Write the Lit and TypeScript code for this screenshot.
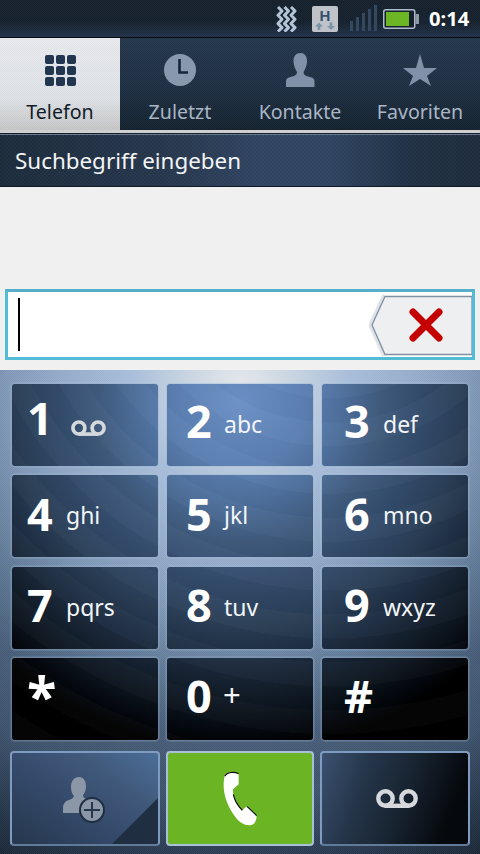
import { LitElement, html, css, svg } from "lit";
import { customElement } from "lit/decorators.js";

const VM = (w: number, h: number) => html`<svg class="vm" width=${w} height=${h} viewBox="0 0 42 19">
  <circle cx="9.5" cy="9.5" r="7.2" fill="none" stroke="#d6d9dc" stroke-width="4.4"/>
  <circle cx="32.5" cy="9.5" r="7.2" fill="none" stroke="#d6d9dc" stroke-width="4.4"/>
  <rect x="9.5" y="14.6" width="23" height="4.4" fill="#d6d9dc"/>
</svg>`;

type K = { n: string; s?: string; vm?: boolean; c?: string };
const KEYS: K[] = [
  { n: "1", vm: true, c: "one" },
  { n: "2", s: "abc" },
  { n: "3", s: "def" },
  { n: "4", s: "ghi" },
  { n: "5", s: "jkl" },
  { n: "6", s: "mno" },
  { n: "7", s: "pqrs" },
  { n: "8", s: "tuv" },
  { n: "9", s: "wxyz" },
  { n: "*", c: "star" },
  { n: "0", s: "+", c: "plus" },
  { n: "#" },
];

@customElement("app-root")
export class AppRoot extends LitElement {
  static styles = css`
    :host { display: block; width: 480px; height: 854px; overflow: hidden; font-family: "Noto Sans", "Open Sans", sans-serif; background: #f0f0f0; }
    .status { height: 37px; box-sizing: content-box; display: flex; align-items: center; justify-content: flex-end; padding-right: 10px; border-bottom: 1px solid #05090e;
      background: repeating-conic-gradient(rgba(255,255,255,.025) 0 25%, transparent 0 50%) 0 0/2px 2px, linear-gradient(#15212d, #15212d 60%, #22324a); }
    .status svg { display: block; flex: none; }
    .wave { margin-right: 14px; }
    .hs { margin-right: 12px; }
    .sig { margin-right: 6px; }
    .time { color: #fff; font-weight: 700; font-size: 20.2px; line-height: 1; margin-left: 10px; width: 41px; white-space: nowrap; font-family: "Noto Sans", sans-serif; }
    .tabs { display: flex; height: 92px; background: repeating-conic-gradient(rgba(255,255,255,.03) 0 25%, transparent 0 50%) 0 0/2px 2px, linear-gradient(#24364a, #1d2e41 55%, #13212e); }
    .tab { width: 120px; display: flex; flex-direction: column; align-items: center; color: #a9b5c4; font-size: 19.6px; }
    .tab .ico { height: 34px; margin-top: 15px; display: flex; align-items: center; justify-content: center; }
    .tab svg { display: block; }
    .tab span { margin-top: 12px; line-height: 26px; }
    .tab.on { background: repeating-conic-gradient(rgba(255,255,255,.18) 0 25%, transparent 0 50%) 0 0/2px 2px, linear-gradient(#e3e5e9, #d9dde2 65%, #bfbfbf); color: #101c2a; }
    .rule { height: 5px; box-sizing: border-box; background: #cfcfcf; display: flex; flex-direction: column; justify-content: flex-end; }
    .rule i { display: block; height: 1px; background: #15202c; }
    .rule b { display: block; height: 1px; background: #66798e; }
    .search { height: 52px; box-sizing: border-box; padding-left: 15px; display: flex; align-items: center; color: #f2f4f6; font-size: 22.4px; border-bottom: 1px solid #0d1a27;
      background: repeating-conic-gradient(rgba(255,255,255,.03) 0 25%, transparent 0 50%) 0 0/4px 4px, linear-gradient(90deg, #1b2a3a 0%, #25364c 35%, #2f4361 55%, #2f4361 68%, #1f3043 85%, #1c2a3b 100%); }
    .body { height: 183px; background: #f0f0f0; display: flex; flex-direction: column; justify-content: flex-end; padding: 0 5px 10px 5px; box-sizing: border-box; }
    .input { height: 71px; box-sizing: border-box; border: 3px solid #52bbd5; border-top: 3px solid #56aecb; background: #fff; display: flex; align-items: stretch; justify-content: space-between; padding-left: 10px; }
    .caret { width: 2px; height: 53px; background: #000; margin-top: 6px; }
    .del { display: block; flex: none; }
    .pad { height: 484px; box-sizing: border-box; padding: 14px 0 0 12px; display: flex; flex-direction: column;
      background:
        repeating-conic-gradient(rgba(255,255,255,.05) 0 25%, transparent 0 50%) 0 0/2px 2px,
        radial-gradient(circle 560px at 240px 16px, #e4e7eb 0, #c9d5e2 50px, #a6bcd8 110px, #95adcb 170px, #7f98b7 230px, #5f7996 290px, #465c78 350px, #3a4f69 420px, #1f2e40 500px, #101b27 560px); }
    .grid { display: grid; grid-template-columns: 146px 146px 146px; grid-auto-rows: 82px; column-gap: 9px; row-gap: 9.3px; }
    .key { border-radius: 3px; color: #fff; display: flex; align-items: center; box-shadow: 0 0 0 1px rgba(140,170,205,.28), 0 0 0 2px rgba(190,210,230,.14);
      background-image:
        repeating-radial-gradient(circle at 330px -140px, rgba(255,255,255,.018) 0 24px, rgba(0,0,0,.015) 24px 48px),
        radial-gradient(circle 360px at 240px 30px, #6c90c6 0, #5a7eb0 70px, #4d6e9a 105px, #3f5a7c 142px, #324a6a 185px, #2a3e56 223px, #1e2e42 256px, #0d1620 306px, #03060b 335px, #000 350px);
      background-size: 480px 484px; background-repeat: no-repeat; }
    .c0 { padding-left: 15px; }
    .c1 { padding-left: 19px; }
    .c2 { padding-left: 22px; }
    .c0 .s, .c2 .s { margin-left: 1px; }
    .r0 { padding-bottom: 10px; }
    .r1 { padding-bottom: 6px; }
    .r2, .r3 { padding-bottom: 7px; }
    .n { flex: none; font-weight: 700; font-size: 45px; line-height: 1; width: 38px; font-family: "Open Sans", "Noto Sans", sans-serif; }
    .s { font-size: 23px; line-height: 1; color: #f3f5f8; }
    .r0 .s { margin-top: 8px; }
    .r1 .s { margin-top: 4px; }
    .r2 .s { margin-top: 7px; }
    .one .n { margin-bottom: 6px; }
    .one .vm { margin: 16px 0 0 6px; }
    .star .n { font-size: 54px; }
    .plus .s { font-size: 31px; font-weight: 400; margin: 0 0 2px -1px; }
    .bottom { display: grid; grid-template-columns: 150px 148px 150px; column-gap: 6px; margin: 11px 0 0 -2px; height: 95px; }
    .bkey { box-sizing: border-box; border: 2px solid #7f9cc0; border-bottom-color: #617a9a; border-radius: 4px; display: flex; align-items: center; justify-content: center; position: relative; overflow: hidden; }
    .add { background: linear-gradient(35deg, #26374c 0%, #34496a 40%, #40597b 70%, #4c6e98 100%); }
    .corner { position: absolute; right: 0; bottom: 0; display: block; }
    .pers { position: relative; margin: 4px 0 0 -2px; display: block; }
    .call { background: #6bb524; border-color: #a8bfd8; }
    .vmk { background: linear-gradient(110deg, #3b5170 0%, #25364a 28%, #172330 55%, #05080c 85%); padding-left: 4px; }
  `;

  private statusIcons() {
    return html`
      <svg class="wave" width="22" height="26" viewBox="0 0 22 26">
        ${[2, 8.5, 15].map((x) => svg`<path d="M${x} 1l4 4-4 4.300 4 4-4 4.300 4 4-4 4" fill="none" stroke="#b4c4d8" stroke-width="3" stroke-linejoin="round"/>`)}
      </svg>
      <svg class="hs" width="26" height="26" viewBox="0 0 26 26">
        <rect width="26" height="26" rx="2" fill="#bfc3c9"/>
        <text x="13" y="15" text-anchor="middle" font-family="Liberation Sans" font-weight="700" font-size="15" fill="#33506f">H</text>
        <path d="M7 16.500l-4 4h2.600V24h2.800v-3.500H11zM19 24l4-4h-2.600v-3.500h-2.800V20H15z" fill="#7d93a8"/>
      </svg>
      <svg class="sig" width="27" height="27" viewBox="0 0 27 27">
        ${[[0, 16], [6, 12], [12, 8], [18, 4], [24, 0]].map(([x, y]) => svg`<rect x=${x} y=${y} width="3" height=${26 - y} fill="#34495f"/>`)}
      </svg>
      <svg width="36" height="20" viewBox="0 0 36 20">
        <rect x="0.75" y="0.75" width="31" height="18.5" rx="2" fill="#15202c" stroke="#aebccb" stroke-width="1.5"/>
        <rect x="3" y="3" width="23" height="14" fill="#6cb524"/>
        <rect x="32.5" y="5" width="3.5" height="10" fill="#8b99a8"/>
      </svg>
      <span class="time">0:14</span>`;
  }

  private addPerson() {
    return html`<svg class="pers" width="42" height="46" viewBox="0 0 42 46">
      <path d="M16 0c4.500 0 7 4 7 9 0 4-1 7-3 9 0 2 1 3 3 4l2 1v13H0v-5c0-4 2-7 6-8 3-1 4-2 5-4-2-2-3-5-3-9 0-6 3-10 8-10z" fill="#8b97a6"/>
      <circle cx="29" cy="33" r="13" fill="#1e2e42"/>
      <circle cx="29" cy="33" r="11" fill="#8b97a6"/>
      <path d="M29 25v16M21 33h16" stroke="#26364b" stroke-width="2"/>
    </svg>`;
  }

  render() {
    return html`
      <div class="status">${this.statusIcons()}</div>
      <div class="tabs">
        <div class="tab on">
          <div class="ico"><svg width="31" height="31" viewBox="0 0 31 31" fill="#22364f">
            ${[0, 11, 22].flatMap((y) => [0, 11, 22].map((x) => svg`<rect x=${x} y=${y} width="9" height="9" rx="2"/>`))}
          </svg></div>
          <span>Telefon</span>
        </div>
        <div class="tab">
          <div class="ico"><svg width="32" height="32" viewBox="0 0 32 32">
            <circle cx="16" cy="16" r="16" fill="#8899ad"/>
            <path d="M15.500 5v13.500H24" fill="none" stroke="#16263a" stroke-width="2.600"/>
          </svg></div>
          <span>Zuletzt</span>
        </div>
        <div class="tab">
          <div class="ico"><svg width="29" height="34" viewBox="0 0 29 34">
            <path d="M14.500 0c4 0 6.500 3 6.500 8 0 5-2.500 9-3.500 11 0 2 1 3 3 4l5 1.500c2 .5 3 2 3 4V34H0v-5.500c0-2 1-3.500 3-4l5-1.500c2-1 3-2 3-4-1-2-3.500-6-3.500-11 0-5 2.500-8 7-8z" fill="#8192a8"/>
          </svg></div>
          <span>Kontakte</span>
        </div>
        <div class="tab">
          <div class="ico"><svg width="34" height="32" viewBox="0 0 34 32">
            <path d="M17 0l4 14h13l-10 8 4 10-11-7-11 7 4-10-10-8h13z" fill="#8192a8"/>
          </svg></div>
          <span>Favoriten</span>
        </div>
      </div>
      <div class="rule"><i></i><b></b></div>
      <div class="search">Suchbegriff eingeben</div>
      <div class="body">
        <div class="input">
          <div class="caret"></div>
          <svg class="del" width="103" height="65" viewBox="0 0 103 65">
            <path d="M15 3L1 33 15 64" fill="none" stroke="#dfe3e8" stroke-width="3.500"/>
            <path d="M103 4.500H16L3 33l13 29.500H103z" fill="#eeeff0" stroke="#7f90a4" stroke-width="1.300"/>
            <path d="M44 20L70 46M70 20L44 46" stroke="#c40000" stroke-width="7" stroke-linecap="round"/>
          </svg>
        </div>
      </div>
      <div class="pad">
        <div class="grid">
          ${KEYS.map((k, i) => {
            const c = i % 3;
            const r = Math.floor(i / 3);
            const pos = `background-position: ${-(12 + c * 155)}px ${-(14 + r * 91.3)}px`;
            return html`<div class="key c${c} r${r} ${k.c ?? ""}" style=${pos}>
              <span class="n">${k.n}</span>
              ${k.vm ? VM(35, 16) : k.s ? html`<span class="s">${k.s}</span>` : ""}
            </div>`;
          })}
        </div>
        <div class="bottom">
          <div class="bkey add">
            <svg class="corner" width="46" height="46" viewBox="0 0 46 46"><path d="M46 0V46H0z" fill="#1f2e40"/></svg>
            ${this.addPerson()}
          </div>
          <div class="bkey call">
            <svg width="35" height="55" viewBox="100 50 105 165">
              <path d="M105 62C112 52 135 52 147 58V90L130 105C128 120 140 150 158 168L172 155L200 183C203 195 195 210 185 212C170 215 150 208 135 185C115 160 100 120 102 85Z" fill="#fff"/>
              <path d="M105 66C112 52 135 52 147 58M172 156L201 184M131 120C135 140 145 155 158 168" fill="none" stroke="#0a0a0a" stroke-width="3.500"/>
            </svg>
          </div>
          <div class="bkey vmk">${VM(42, 19)}</div>
        </div>
      </div>`;
  }
}
